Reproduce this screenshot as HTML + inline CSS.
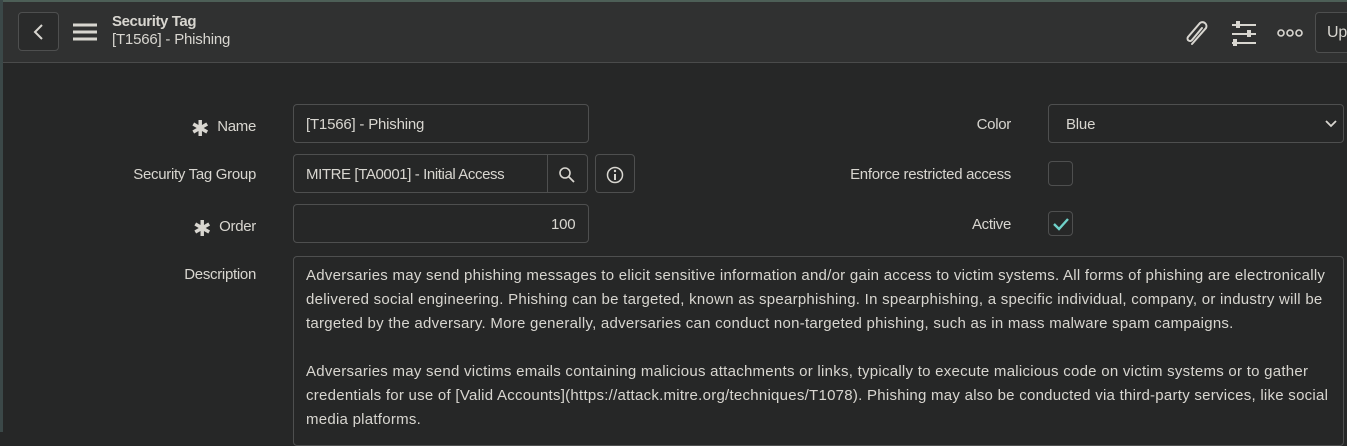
<!DOCTYPE html>
<html><head><meta charset="utf-8"><style>
*{box-sizing:border-box;margin:0;padding:0}
body{width:1347px;height:432px;overflow:hidden;background:#262727;font-family:"Liberation Sans",sans-serif;color:#d8d6d0;font-size:15px;position:relative}
.a{position:absolute}
.hdr{left:0;top:0;width:1347px;height:63px;background:#303131;border-bottom:1px solid #4a4b4b;border-top:2px solid #4d5f57}
.lbar{left:0;top:0;width:3px;height:432px;background:#3b4848}
.box{position:absolute;border:1px solid #4e4f4f;border-radius:4px;background:#262727}
.lbl{position:absolute;text-align:right;font-size:15px;color:#d8d6d0;width:300px;letter-spacing:-0.3px}
.txt{position:absolute;font-size:15px;color:#d8d6d0;white-space:nowrap;letter-spacing:-0.2px}
.star{font-size:22px;vertical-align:-5px;margin-right:8px}
.desc{left:293px;top:256px;width:1051px;height:190px;border:1px solid #4e4f4f;border-radius:4px;padding:7px 12px;line-height:24px;font-size:15px;white-space:nowrap;letter-spacing:0.26px}
</style></head><body>
<div class="a hdr"></div>
<div class="a lbar"></div>
<div class="box" style="left:18px;top:12px;width:41px;height:39px;background:#2a2b2b"></div>
<svg class="a" style="left:30px;top:22px" width="18" height="20"><path d="M12 3 L5 10 L12 17" stroke="#d8d6d0" stroke-width="2" fill="none"/></svg>
<svg class="a" style="left:72px;top:22px" width="26" height="20"><path d="M1 3H25M1 10H25M1 17H25" stroke="#d8d6d0" stroke-width="3"/></svg>
<div class="txt" style="left:112px;top:13px;font-weight:bold;font-size:15px;letter-spacing:-0.4px">Security Tag</div>
<div class="txt" style="left:112px;top:31px;font-size:15px;letter-spacing:-0.2px">[T1566] - Phishing</div>
<svg class="a" style="left:1183px;top:18px" width="30" height="30"><path d="M9 26 L23 10 a4 4 0 0 0 -6 -5 L5 19 a2.5 2.5 0 0 0 4 3 L19 10" stroke="#d8d6d0" stroke-width="2" fill="none" stroke-linecap="round"/></svg>
<svg class="a" style="left:1230px;top:20px" width="28" height="26"><path d="M2 5H26M2 14H26M2 23H26" stroke="#d8d6d0" stroke-width="2"/><rect x="6" y="1" width="4" height="7" fill="#d8d6d0"/><rect x="17" y="10" width="4" height="7" fill="#d8d6d0"/><rect x="3" y="19" width="4" height="7" fill="#d8d6d0"/></svg>
<svg class="a" style="left:1276px;top:27px" width="28" height="12"><circle cx="5" cy="6" r="3" stroke="#d8d6d0" stroke-width="1.6" fill="none"/><circle cx="14" cy="6" r="3" stroke="#d8d6d0" stroke-width="1.6" fill="none"/><circle cx="23" cy="6" r="3" stroke="#d8d6d0" stroke-width="1.6" fill="none"/></svg>
<div class="box" style="left:1315px;top:12px;width:50px;height:41px;background:#2a2b2b"></div>
<div class="txt" style="left:1327px;top:24px;font-size:16px">Up</div>

<div class="lbl" style="left:-44px;top:116px"><span class="star">✱</span>Name</div>
<div class="lbl" style="left:-44px;top:166px">Security Tag Group</div>
<div class="lbl" style="left:-44px;top:216px"><span class="star">✱</span>Order</div>
<div class="lbl" style="left:-44px;top:266px">Description</div>

<div class="box" style="left:293px;top:104px;width:296px;height:39px"></div>
<div class="txt" style="left:306px;top:116px">[T1566] - Phishing</div>
<div class="box" style="left:293px;top:154px;width:295px;height:39px"></div>
<div class="a" style="left:547px;top:155px;width:1px;height:37px;background:#4e4f4f"></div>
<div class="txt" style="left:306px;top:166px;letter-spacing:-0.4px">MITRE [TA0001] - Initial Access</div>
<svg class="a" style="left:558px;top:166px" width="18" height="18"><circle cx="7" cy="7" r="5" stroke="#d8d6d0" stroke-width="1.6" fill="none"/><path d="M11 11L16 16" stroke="#d8d6d0" stroke-width="1.8"/></svg>
<div class="box" style="left:595px;top:154px;width:40px;height:39px"></div>
<svg class="a" style="left:606px;top:166px" width="18" height="18"><circle cx="9" cy="9" r="7.5" stroke="#d8d6d0" stroke-width="1.5" fill="none"/><path d="M9 8V14" stroke="#d8d6d0" stroke-width="2"/><circle cx="9" cy="5" r="1.2" fill="#d8d6d0"/></svg>
<div class="box" style="left:293px;top:204px;width:296px;height:39px"></div>
<div class="txt" style="left:551px;top:216px">100</div>

<div class="lbl" style="left:711px;top:116px">Color</div>
<div class="lbl" style="left:711px;top:166px">Enforce restricted access</div>
<div class="lbl" style="left:711px;top:216px">Active</div>
<div class="box" style="left:1048px;top:104px;width:296px;height:39px"></div>
<div class="txt" style="left:1066px;top:116px">Blue</div>
<svg class="a" style="left:1324px;top:118px" width="14" height="12"><path d="M2 3L7 8L12 3" stroke="#d8d6d0" stroke-width="1.8" fill="none"/></svg>
<div class="box" style="left:1048px;top:161px;width:25px;height:25px"></div>
<div class="box" style="left:1048px;top:211px;width:25px;height:25px"></div>
<svg class="a" style="left:1051px;top:214px" width="20" height="20"><path d="M3 10L8 15L17 5" stroke="#6fd1c9" stroke-width="2.4" fill="none"/></svg>

<div class="a desc">Adversaries may send phishing messages to elicit sensitive information and/or gain access to victim systems. All forms of phishing are electronically<br>delivered social engineering. Phishing can be targeted, known as spearphishing. In spearphishing, a specific individual, company, or industry will be<br>targeted by the adversary. More generally, adversaries can conduct non-targeted phishing, such as in mass malware spam campaigns.<br><br>Adversaries may send victims emails containing malicious attachments or links, typically to execute malicious code on victim systems or to gather<br>credentials for use of [Valid Accounts](https://attack.mitre.org/techniques/T1078). Phishing may also be conducted via third-party services, like social<br>media platforms.</div>
</body></html>
